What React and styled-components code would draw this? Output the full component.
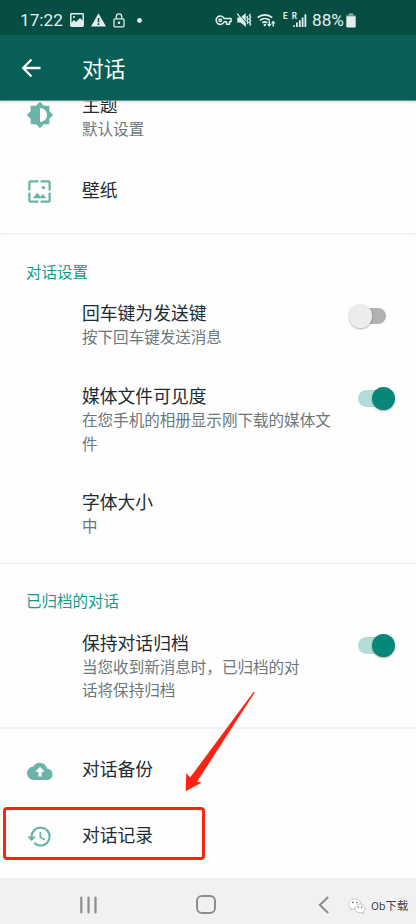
import styled, { createGlobalStyle } from "styled-components";
import { MdBrightnessMedium, MdWallpaper, MdHistory } from "react-icons/md";

const GlobalStyle = createGlobalStyle`
  * {
    box-sizing: border-box;
  }

  body {
    margin: 0;
    background: #fff;
    font-family: Roboto, "Noto Sans CJK SC", sans-serif;
  }

  svg {
    display: block;
    flex: none;
  }
`;

const Screen = styled("div")`
  position: relative;
  display: flex;
  flex-direction: column;
  width: 416px;
  height: 924px;
  overflow: hidden;
  background: #fefefe;
`;

const StatusBar = styled("div")`
  display: grid;
  grid-template-columns: 215px 1fr;
  align-items: center;
  height: 35px;
  padding-top: 5px;
  background: #064d44;
  color: #e4eeec;
`;

const StatusGroup = styled("div")`
  display: flex;
  align-items: center;
  height: 30px;
  padding-left: ${(p) => p.$indent || 0}px;
  gap: ${(p) => p.$gap}px;
`;

const StatusText = styled("span")`
  width: ${(p) => p.$width}px;
  font-size: 17.2px;
  line-height: 20px;
  white-space: nowrap;
`;

const AppBar = styled("header")`
  display: flex;
  align-items: center;
  flex: none;
  height: 66px;
  padding-left: 21px;
  background: #075f55;
  border-bottom: 1px solid #5c958e;
  color: #fff;

  h1 {
    margin: 4px 0 0 41px;
    font-size: 21.8px;
    font-weight: 400;
    line-height: 30px;
  }
`;

const Content = styled("main")`
  flex: 1;
  min-height: 0;
  overflow: hidden;
  box-shadow: inset 0 3px 3px -2px #ddd;
`;

const Group = styled("section")`
  padding: 8px 0 ${(p) => p.$bottom || 8}px;
  margin-top: ${(p) => p.$shift || 0}px;
  border-bottom: ${(p) => p.$line || "none"};
`;

const GroupTitle = styled("h2")`
  height: 41.5px;
  margin: 0;
  padding: 17.5px 0 0 26px;
  color: #159a8a;
  font-size: 15.5px;
  font-weight: 400;
  line-height: 24px;
`;

const Row = styled("div")`
  display: flex;
  padding: ${(p) => (p.$single ? "20.7px" : "17.6px")} 0;
`;

const IconSlot = styled("div")`
  display: flex;
  align-items: center;
  width: 82px;
  height: ${(p) => (p.$single ? 25 : 43)}px;
  margin-bottom: -2px;
  padding-left: 26px;
  color: #69b3a8;
`;

const Label = styled("div")`
  flex: 1;

  h3 {
    margin: 0;
    color: #202c33;
    font-size: 17.8px;
    font-weight: 400;
    line-height: 24px;
  }

  p {
    margin: 1px 0 -1px;
    color: #6c777b;
    font-size: 15.55px;
    line-height: 23.6px;
    white-space: pre-line;
  }
`;

const Track = styled("div")`
  flex: none;
  width: 28px;
  height: 16.5px;
  margin: 5.4px 30px 0 0;
  border-radius: 9px;
  background: ${(p) => (p.$on ? "#b2dcd6" : "#b1b1b1")};
`;

const Thumb = styled("div")`
  width: 23.4px;
  height: 23.4px;
  margin: -3.5px 0 0 ${(p) => (p.$on ? 14 : -9)}px;
  border-radius: 50%;
  background: ${(p) => (p.$on ? "#068777" : "#ececec")};
  box-shadow: 0 1px 2px rgba(0, 0, 0, 0.3);
`;

const NavBar = styled("nav")`
  display: flex;
  align-items: center;
  flex: none;
  height: 46px;
  padding: 7px 0 0 80px;
  background: #f1f1f1;
  color: #8d8d8d;
`;

const HomeButton = styled("div")`
  width: 20px;
  height: 19px;
  margin: 0 102px 0 98px;
  border: 2px solid #8d8d8d;
  border-radius: 6px;
`;

const Watermark = styled("div")`
  display: flex;
  align-items: center;
  gap: 5px;
  margin: 3px 0 0 18px;
  color: #444;
  font-size: 11.5px;
  line-height: 16px;
  text-shadow: -1px -1px 0 #fff;
`;

const Highlight = styled("div")`
  position: absolute;
  left: 3px;
  top: 807px;
  width: 202px;
  height: 53px;
  border: 3px solid #ff2113;
  border-radius: 4px;
`;

const Pointer = styled("svg")`
  position: absolute;
  left: 180px;
  top: 688px;
`;

const PhotoIcon = () => (
  <svg width="14" height="14" viewBox="0 0 14 14" fill="none">
    <rect x="0.8" y="0.8" width="12.4" height="12.4" rx="0.6" stroke="currentColor" strokeWidth="1.5" />
    <path d="M1 10l3-3 2 2 4-4 3 3v5H1z" fill="currentColor" />
    <circle cx="4" cy="4" r="1.1" fill="currentColor" />
  </svg>
);

const WarningIcon = () => (
  <svg width="15" height="14" viewBox="0 0 15 14">
    <path
      fillRule="evenodd"
      fill="currentColor"
      d="M7.5 0.3L15 13.5H0zM6.7 5v4.2h1.6V5zM6.7 10.3v1.6h1.6v-1.6z"
    />
  </svg>
);

const LockIcon = () => (
  <svg width="12" height="15" viewBox="0 0 12 15" fill="none" stroke="currentColor" strokeWidth="1.3">
    <rect x="1" y="5.8" width="10" height="8" rx="1" />
    <path d="M3.3 5.8V3.6a2.7 2.7 0 0 1 5.4 0v2.2" />
    <circle cx="6" cy="9.8" r="1.3" fill="currentColor" stroke="none" />
  </svg>
);

const DotIcon = () => (
  <svg width="5" height="5" viewBox="0 0 5 5">
    <circle cx="2.5" cy="2.5" r="2.4" fill="currentColor" />
  </svg>
);

const KeyIcon = () => (
  <svg width="17" height="11" viewBox="0 0 17 11" fill="none" stroke="currentColor" strokeWidth="1.5">
    <path d="M9.2 3.6H16v3.2h-1.5v2.4h-3V6.8H9.2a4.2 4.2 0 1 1 0-3.2z" strokeLinejoin="round" />
    <circle cx="5.2" cy="5.2" r="1.3" />
  </svg>
);

const MuteIcon = () => (
  <svg width="15" height="14" viewBox="0 0 15 14">
    <path d="M0.3 4.4h3.2L8.7 0v14L3.5 9.6H0.3z" fill="currentColor" />
    <path d="M1.2 0l8.6 10.5" stroke="#064d44" strokeWidth="0.9" />
    <path d="M0.3 0.7l8.7 11.2" stroke="currentColor" strokeWidth="1.1" />
    <path
      d="M10.8 3l-0.9 1.5 1.2 1.6-1.2 1.6 1.2 1.6-0.9 1.5M13.4 0.8l-1 1.7 1.3 1.7-1.3 1.7 1.3 1.7-1.3 1.7 1.3 1.7-1 1.7"
      stroke="currentColor"
      strokeWidth="1.3"
      fill="none"
    />
  </svg>
);

const WifiIcon = () => (
  <svg width="19" height="15" viewBox="0 0 19 15" fill="none" stroke="currentColor">
    <path d="M0.6 4.6a11 11 0 0 1 14.6 0M3 7.4a7.4 7.4 0 0 1 9.8 0M5.3 9.9a4 4 0 0 1 5 0" strokeWidth="1.6" />
    <circle cx="7.8" cy="12" r="1.2" fill="currentColor" stroke="none" />
    <path d="M12.3 8v4M16.2 13.5v-4" strokeWidth="1.4" />
    <path d="M10 11h4.6l-2.3 3zM13.9 10.5h4.6l-2.3-3z" fill="currentColor" stroke="none" />
  </svg>
);

const SignalIcon = () => (
  <svg width="24" height="18" viewBox="0 0 24 18" fill="currentColor">
    <text x="0" y="8.3" fontSize="8.2" fontWeight="700">
      E
    </text>
    <text x="8.8" y="8.3" fontSize="8.2" fontWeight="700">
      R
    </text>
    <path d="M10.3 14.2h1.6V16h-1.6zM13 11.5h1.8V16H13zM15.9 9.3h1.8V16h-1.8zM18.7 6.5h1.8V16h-1.8zM21.5 3.3h1.8V16h-1.8z" />
  </svg>
);

const BatteryIcon = () => (
  <svg width="10" height="15" viewBox="0 0 10 15" fill="currentColor">
    <rect x="2.8" y="0.3" width="4.4" height="2" opacity="0.55" />
    <rect x="0.3" y="1.7" width="9.4" height="2.5" opacity="0.35" />
    <rect x="0.3" y="3.2" width="9.4" height="11.2" rx="0.8" />
  </svg>
);

const BackArrow = () => (
  <svg width="20" height="20" viewBox="0 0 20 20" fill="none" stroke="currentColor" strokeWidth="2.3">
    <path d="M19.5 10H2.5M10.5 1.5L2.2 10l8.3 8.5" />
  </svg>
);

const CloudIcon = () => (
  <svg width="28" height="28" viewBox="0 0 28 28">
    <path
      fillRule="evenodd"
      fill="currentColor"
      d="M21 11.5A7.4 7.4 0 0 0 7.4 9.6 6.7 6.7 0 0 0 8 23H20.7a5.75 5.75 0 0 0 .3-11.5zM14 9.8l4.9 5h-3.2v4.6h-3.4v-4.6H9.1z"
    />
  </svg>
);

const RecentsIcon = () => (
  <svg width="18" height="18" viewBox="0 0 18 18" stroke="currentColor" strokeWidth="2.2" strokeLinecap="round">
    <path d="M1.3 1.5v15M8.5 1.5v15M15.5 1.5v15" />
  </svg>
);

const NavBackIcon = () => (
  <svg width="12" height="18" viewBox="0 0 12 18" fill="none" stroke="currentColor" strokeWidth="2">
    <path d="M10.2 1L1.8 9l8.4 8" />
  </svg>
);

const WechatIcon = () => (
  <svg width="18" height="16" viewBox="0 0 18 16" fill="#fff" stroke="#b5b5b5" strokeWidth="0.7">
    <path d="M6.8 1C3.4 1 0.8 3.2 0.8 6c0 1.6.8 3 2.2 3.9L2.6 12l2.2-1.2c.7.2 1.4.3 2 .3 3.4 0 6-2.2 6-5s-2.6-5.1-6-5.1z" />
    <path d="M12 6c-2.9 0-5.2 2-5.2 4.4s2.3 4.4 5.2 4.4c.6 0 1.2-.1 1.8-.3l1.8 1-.4-1.8c1.2-.8 1.9-2 1.9-3.3C17.1 8 14.9 6 12 6z" />
    <g fill="#444" stroke="none">
      <circle cx="4.9" cy="4.5" r="0.8" />
      <circle cx="8.8" cy="4.5" r="0.8" />
      <circle cx="10.3" cy="9" r="0.7" />
      <circle cx="13.7" cy="9" r="0.7" />
    </g>
  </svg>
);

const Setting = (props) => {
  const { title, text, icon, on } = props;
  return (
    <Row $single={!text}>
      <IconSlot $single={!text}>{icon}</IconSlot>
      <Label>
        <h3>{title}</h3>
        {text && <p>{text}</p>}
      </Label>
      {on !== undefined && (
        <Track $on={on}>
          <Thumb $on={on} />
        </Track>
      )}
    </Row>
  );
};

const App = () => {
  return (
    <>
      <GlobalStyle />
      <Screen>
        <StatusBar>
          <StatusGroup $indent={20} $gap={7}>
            <StatusText $width={43}>17:22</StatusText>
            <PhotoIcon />
            <WarningIcon />
            <LockIcon />
            <StatusGroup $indent={5}>
              <DotIcon />
            </StatusGroup>
          </StatusGroup>
          <StatusGroup $gap={5}>
            <KeyIcon />
            <MuteIcon />
            <WifiIcon />
            <StatusGroup $indent={2}>
              <SignalIcon />
            </StatusGroup>
            <StatusText $width={29}>88%</StatusText>
            <BatteryIcon />
          </StatusGroup>
        </StatusBar>
        <AppBar>
          <BackArrow />
          <h1>对话</h1>
        </AppBar>
        <Content>
          <Group $shift={-33} $bottom={9} $line="2px solid #f1f2f2">
            <Setting title="主题" text="默认设置" icon={<MdBrightnessMedium size={28} />} />
            <Setting title="壁纸" icon={<MdWallpaper size={27} />} />
          </Group>
          <Group $bottom={6} $line="1px solid #e6e8e8">
            <GroupTitle>对话设置</GroupTitle>
            <Setting title="回车键为发送键" text="按下回车键发送消息" on={false} />
            <Setting title="媒体文件可见度" text={"在您手机的相册显示刚下载的媒体文\n件"} on />
            <Setting title="字体大小" text="中" />
          </Group>
          <Group $shift={1} $bottom={7} $line="2px solid #f1f2f2">
            <GroupTitle>已归档的对话</GroupTitle>
            <Setting title="保持对话归档" text={"当您收到新消息时，已归档的对\n话将保持归档"} on />
          </Group>
          <Group>
            <Setting title="对话备份" icon={<CloudIcon />} />
            <Setting title="对话记录" icon={<MdHistory size={27} />} />
          </Group>
        </Content>
        <NavBar>
          <RecentsIcon />
          <HomeButton />
          <NavBackIcon />
          <Watermark>
            <WechatIcon />
            <span>Ob下载</span>
          </Watermark>
        </NavBar>
        <Highlight />
        <Pointer width="80" height="108" viewBox="180 688 80 108">
          <path d="M253.5 692h1.5L197 781.8l4.8.7L185.7 791.3 186.3 773l3.8 4.6z" fill="#ff2113" />
        </Pointer>
      </Screen>
    </>
  );
};

export default App;
